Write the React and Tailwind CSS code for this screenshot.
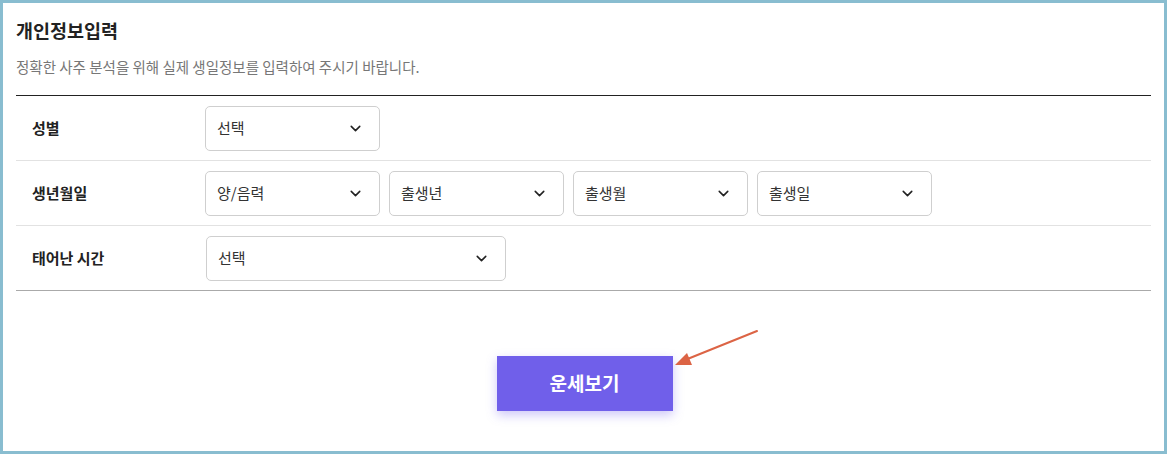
import { ChevronDown } from 'lucide-react'

function Select({ label, width = 'w-[175px]' }) {
  return (
    <div className={`${width} h-[45px] border border-[#cfcfcf] rounded-[5px] flex items-center justify-between pl-[11px] pr-[15px] bg-white`}>
      <span className="text-[15px] text-[#333]">{label}</span>
      <ChevronDown size={17} strokeWidth={2.2} className="text-[#222]" />
    </div>
  )
}

function Row({ label, children, last }) {
  return (
    <div className={`flex items-center h-[65px] ${last ? 'border-b border-[#aaaaaa]' : 'border-b border-[#e2e2e2]'}`}>
      <div className="w-[189px] pl-4 text-[15px] font-bold text-[#222]">{label}</div>
      <div className="flex gap-[9px]">{children}</div>
    </div>
  )
}

export default function App() {
  return (
    <div
      className="w-[1167px] h-[454px] bg-[#89bdd0] p-[3px]"
      style={{ fontFamily: '"Noto Sans CJK KR", "Noto Sans", sans-serif' }}
    >
      <div className="bg-white h-full px-[13px] relative">
        <h1 className="pt-[15px] text-[18.5px] font-bold text-[#222] leading-[24px]">개인정보입력</h1>
        <p className="mt-[15px] text-[14.5px] text-[#777] leading-[20px]">
          정확한 사주 분석을 위해 실제 생일정보를 입력하여 주시기 바랍니다.
        </p>
        <div className="mt-[18px] border-t border-[#222]">
          <Row label="성별">
            <Select label="선택" />
          </Row>
          <Row label="생년월일">
            <Select label="양/음력" />
            <Select label="출생년" />
            <Select label="출생월" />
            <Select label="출생일" />
          </Row>
          <Row label="태어난 시간" last>
            <div className="ml-px">
              <Select label="선택" width="w-[300px]" />
            </div>
          </Row>
        </div>
        <div className="flex justify-center pt-[65px] pl-[2px]">
          <button className="w-[176px] h-[55px] bg-[#705fea] text-white text-[19px] font-bold shadow-[0_4px_10px_rgba(112,95,234,0.35)]">
            운세보기
          </button>
        </div>
        <svg className="absolute left-[668px] top-[324px]" width="95" height="45" viewBox="0 0 95 45">
          <line x1="86" y1="4" x2="14" y2="33" stroke="#dc6445" strokeWidth="2" strokeLinecap="round" />
          <polygon points="4,38 16,26 21,38" fill="#dc6445" />
        </svg>
      </div>
    </div>
  )
}
